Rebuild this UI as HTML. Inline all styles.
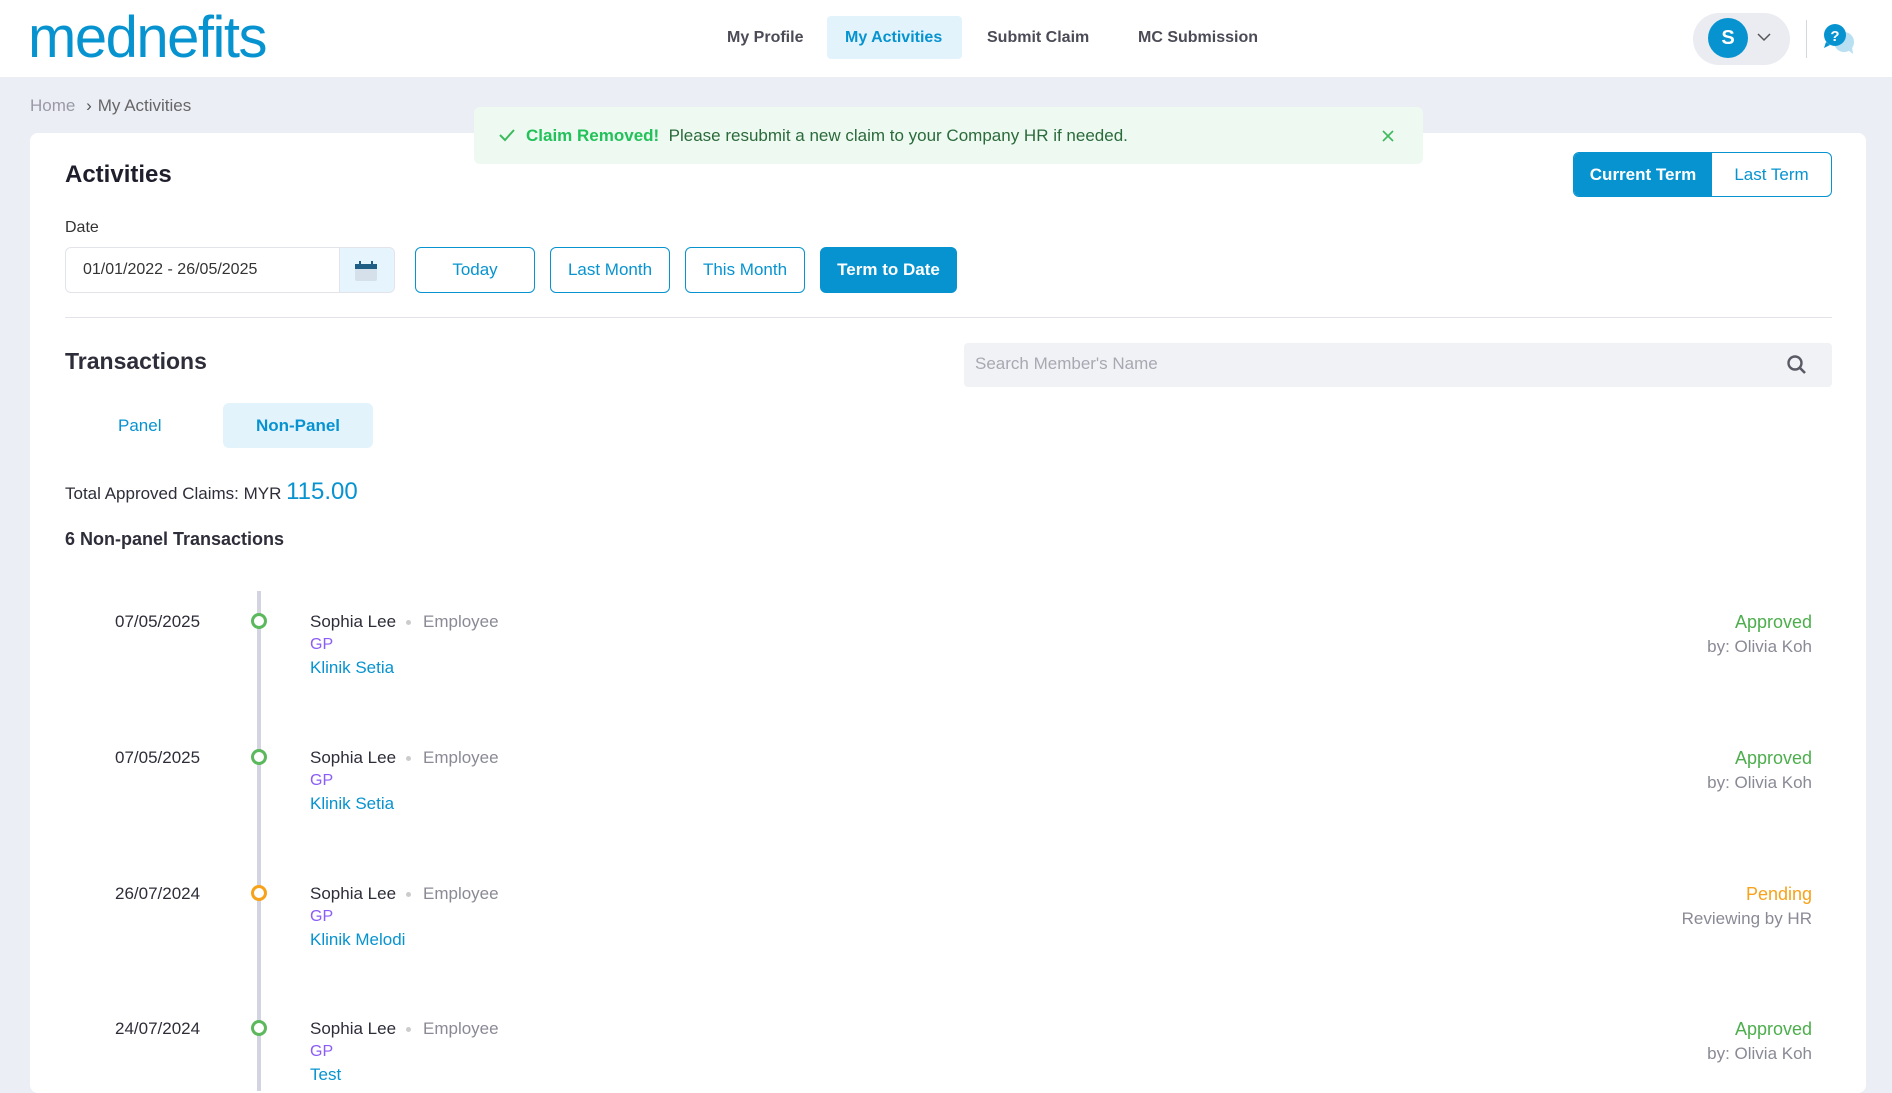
<!DOCTYPE html>
<html><head><meta charset="utf-8"><style>
*{box-sizing:border-box;margin:0;padding:0}
body{width:1892px;height:1079px;overflow:hidden;background:#eceef6;font-family:"Liberation Sans",sans-serif;position:relative;color:#2e2e3a}
.a{position:absolute;white-space:nowrap}
.hdr{position:absolute;left:0;top:0;width:1892px;height:77px;background:#fff}
.nav{font-size:16px;color:#4b4b57;font-weight:bold;top:29px}
.card{position:absolute;left:30px;top:133px;width:1836px;height:960px;background:#fff;border-radius:8px}
.btn{position:absolute;top:247px;height:46px;border:1.5px solid #0793d0;border-radius:6px;color:#0793d0;font-size:17px;display:flex;align-items:center;justify-content:center}
.date{font-size:17px;color:#2e2e3a;left:115px}
.name{font-size:17px;color:#2e2e3a;left:310px}
.emp{font-size:17px;color:#8a8a96;left:423px}
.dotsep{width:5px;height:5px;border-radius:50%;background:#ccc;left:406px}
.gp{font-size:16px;color:#8b5cf6;left:310px}
.kl{font-size:17px;color:#0793d0;left:310px}
.dot{width:16px;height:16px;border-radius:50%;border:3.5px solid #5cb85c;background:#fff;left:251px}
.st{font-size:18px;right:80px;text-align:right}
.by{font-size:17px;color:#8a8a96;right:80px}
</style></head><body>
<div class="hdr"></div>
<div class="a" style="left:28px;top:4px;font-size:58px;color:#0793d0;letter-spacing:-1.5px;font-family:'Liberation Sans',sans-serif">mednefits</div>
<div class="a nav" style="left:727px">My Profile</div>
<div class="a" style="left:827px;top:16px;width:135px;height:43px;background:#e3f3fc;border-radius:4px"></div>
<div class="a nav" style="left:845px;color:#0793d0">My Activities</div>
<div class="a nav" style="left:987px">Submit Claim</div>
<div class="a nav" style="left:1138px">MC Submission</div>
<div class="a" style="left:1693px;top:13px;width:97px;height:52px;background:#ebecf1;border-radius:26px"></div>
<div class="a" style="left:1708px;top:18px;width:40px;height:40px;background:#0793d0;border-radius:50%;color:#fff;font-weight:bold;font-size:20px;text-align:center;line-height:40px">S</div>
<svg class="a" style="left:1757px;top:32px" width="14" height="10"><path d="M1 2l6 6 6-6" stroke="#555" stroke-width="1.5" fill="none"/></svg>
<div class="a" style="left:1806px;top:20px;width:1px;height:38px;background:#d5d7df"></div>
<svg class="a" style="left:1822px;top:22px" width="34" height="34"><circle cx="22" cy="20" r="10" fill="#b8dff2"/><path d="M26 28l5 4-1-7z" fill="#b8dff2"/><circle cx="13" cy="13" r="11" fill="#0793d0"/><path d="M4 20l-2 6 6-3z" fill="#0793d0"/><text x="13" y="19" font-size="15" font-weight="bold" fill="#fff" text-anchor="middle" font-family="Liberation Sans">?</text></svg>
<div class="a" style="left:30px;top:96px;font-size:17px;color:#9a9aa6">Home <span style="color:#555;margin:0 6px">›</span><span style="color:#666">My Activities</span></div>
<div class="card"></div>
<div class="a" style="left:474px;top:107px;width:949px;height:57px;background:#eefaf1;border-radius:6px"></div>
<svg class="a" style="left:498px;top:128px" width="18" height="14"><path d="M2 7l5 5 9-10" stroke="#3cba5c" stroke-width="2" fill="none"/></svg>
<div class="a" style="left:526px;top:126px;font-size:17px;color:#2b6a3b"><b style="color:#22c15a">Claim Removed!</b>&nbsp; Please resubmit a new claim to your Company HR if needed.</div>
<svg class="a" style="left:1381px;top:129px" width="14" height="14"><path d="M2 2l10 10M12 2L2 12" stroke="#3cba5c" stroke-width="1.6"/></svg>
<div class="a" style="left:65px;top:161px;font-size:24px;font-weight:bold;color:#1e1e2c">Activities</div>
<div class="a" style="left:1573px;top:152px;width:259px;height:45px;border:1.5px solid #0793d0;border-radius:6px;overflow:hidden;display:flex">
<div style="width:138px;background:#0793d0;color:#fff;font-weight:bold;font-size:17px;display:flex;align-items:center;justify-content:center">Current Term</div>
<div style="flex:1;color:#0793d0;font-size:17px;display:flex;align-items:center;justify-content:center">Last Term</div></div>
<div class="a" style="left:65px;top:219px;font-size:16px;color:#333">Date</div>
<div class="a" style="left:65px;top:247px;width:330px;height:46px;border:1px solid #e2e4ea;border-radius:6px;overflow:hidden">
<div style="position:absolute;left:17px;top:13px;font-size:16px;color:#333">01/01/2022 - 26/05/2025</div>
<div style="position:absolute;right:0;top:0;width:55px;height:46px;background:#e5f4fd;border-left:1px solid #e2e4ea"></div>
<svg style="position:absolute;right:16px;top:12px" width="24" height="22"><rect x="1" y="4" width="22" height="17" rx="2" fill="#d6e0ea"/><rect x="1" y="4" width="22" height="5" fill="#1f5f86"/><rect x="5" y="1" width="2" height="5" fill="#1f5f86"/><rect x="17" y="1" width="2" height="5" fill="#1f5f86"/></svg></div>
<div class="btn" style="left:415px;width:120px">Today</div>
<div class="btn" style="left:550px;width:120px">Last Month</div>
<div class="btn" style="left:685px;width:120px">This Month</div>
<div class="btn" style="left:820px;width:137px;background:#0793d0;color:#fff;font-weight:bold">Term to Date</div>
<div class="a" style="left:65px;top:317px;width:1767px;height:1px;background:#e2e4ea"></div>
<div class="a" style="left:65px;top:348px;font-size:23px;font-weight:bold;color:#2e2e3a">Transactions</div>
<div class="a" style="left:964px;top:343px;width:868px;height:44px;background:#f1f2f6;border-radius:4px"></div>
<div class="a" style="left:975px;top:354px;font-size:17px;color:#a8a8b2">Search Member's Name</div>
<svg class="a" style="left:1786px;top:354px" width="22" height="22"><circle cx="9" cy="9" r="6.5" stroke="#5a5a66" stroke-width="2.4" fill="none"/><path d="M14 14l5 5" stroke="#5a5a66" stroke-width="2.6"/></svg>
<div class="a" style="left:118px;top:416px;font-size:17px;color:#0793d0">Panel</div>
<div class="a" style="left:223px;top:403px;width:150px;height:45px;background:#e3f3fc;border-radius:6px;color:#0793d0;font-size:17px;font-weight:bold;display:flex;align-items:center;justify-content:center">Non-Panel</div>
<div class="a" style="left:65px;top:478px;font-size:17px;color:#2e2e3a">Total Approved Claims: MYR <span style="font-size:24px;color:#0793d0">115.00</span></div>
<div class="a" style="left:65px;top:529px;font-size:18px;font-weight:bold;color:#2e2e3a">6 Non-panel Transactions</div>
<div class="a" style="left:257px;top:591px;width:4px;height:500px;background:#d3d3e2"></div>

<div class="a date" style="top:612px">07/05/2025</div>
<div class="a dot" style="top:613px"></div>
<div class="a name" style="top:612px">Sophia Lee</div><div class="a dotsep" style="top:620px"></div><div class="a emp" style="top:612px">Employee</div>
<div class="a gp" style="top:636px">GP</div><div class="a kl" style="top:658px">Klinik Setia</div>
<div class="a st" style="top:612px;color:#4cae4c">Approved</div><div class="a by" style="top:637px">by: Olivia Koh</div>

<div class="a date" style="top:748px">07/05/2025</div>
<div class="a dot" style="top:749px"></div>
<div class="a name" style="top:748px">Sophia Lee</div><div class="a dotsep" style="top:756px"></div><div class="a emp" style="top:748px">Employee</div>
<div class="a gp" style="top:772px">GP</div><div class="a kl" style="top:794px">Klinik Setia</div>
<div class="a st" style="top:748px;color:#4cae4c">Approved</div><div class="a by" style="top:773px">by: Olivia Koh</div>

<div class="a date" style="top:884px">26/07/2024</div>
<div class="a dot" style="top:885px;border-color:#f7a21b"></div>
<div class="a name" style="top:884px">Sophia Lee</div><div class="a dotsep" style="top:892px"></div><div class="a emp" style="top:884px">Employee</div>
<div class="a gp" style="top:908px">GP</div><div class="a kl" style="top:930px">Klinik Melodi</div>
<div class="a st" style="top:884px;color:#f7a21b">Pending</div><div class="a by" style="top:909px">Reviewing by HR</div>

<div class="a date" style="top:1019px">24/07/2024</div>
<div class="a dot" style="top:1020px"></div>
<div class="a name" style="top:1019px">Sophia Lee</div><div class="a dotsep" style="top:1027px"></div><div class="a emp" style="top:1019px">Employee</div>
<div class="a gp" style="top:1043px">GP</div><div class="a kl" style="top:1065px">Test</div>
<div class="a st" style="top:1019px;color:#4cae4c">Approved</div><div class="a by" style="top:1044px">by: Olivia Koh</div>
</body></html>
